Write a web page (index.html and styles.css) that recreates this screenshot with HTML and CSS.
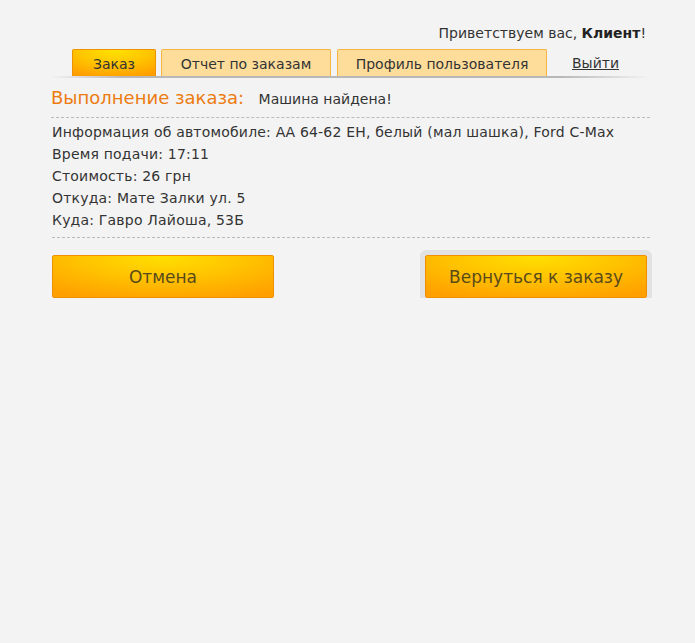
FILE: index.html
```html
<!DOCTYPE html>
<html lang="ru">
<head>
  <meta charset="UTF-8">
  <title>Выполнение заказа</title>
  <link rel="stylesheet" href="styles.css">
</head>
<body>
  <div class="container">
    <div class="greeting">Приветствуем вас, <b>Клиент</b>!</div>

    <div class="tabs">
      <a class="tab active" href="#">Заказ</a>
      <a class="tab tab-report" href="#">Отчет по заказам</a>
      <a class="tab tab-profile" href="#">Профиль пользователя</a>
      <a class="logout" href="#">Выйти</a>
    </div>

    <div class="content">
      <div class="title">
        <span class="title-main">Выполнение заказа:</span>
        <span class="title-status">Машина найдена!</span>
      </div>

      <div class="info">
        <div>Информация об автомобиле: АА 64-62 ЕН, белый (мал шашка), Ford C-Max</div>
        <div>Время подачи: 17:11</div>
        <div>Стоимость: 26 грн</div>
        <div>Откуда: Мате Залки ул. 5</div>
        <div>Куда: Гавро Лайоша, 53Б</div>
      </div>

      <div class="actions">
        <button class="btn">Отмена</button>
        <button class="btn focused">Вернуться к заказу</button>
      </div>
    </div>
  </div>
</body>
</html>
```

FILE: styles.css
```css
body {
  margin: 0;
  background: #f3f3f3;
  font-family: "DejaVu Sans", Verdana, sans-serif;
  font-size: 14px;
  color: #333;
}

.container {
  width: 600px;
  margin-left: 50px;
  padding-top: 23px;
}

.greeting {
  text-align: right;
  padding-right: 4px;
  line-height: 20px;
}

.greeting b {
  color: #222;
}

.tabs {
  display: flex;
  align-items: flex-end;
  gap: 5px;
  margin-top: 6px;
  padding: 0 0 2px 22px;
  height: 27px;
  background: linear-gradient(to right, rgba(180, 180, 180, 0), #b8b8b8 12%, #b8b8b8 85%, rgba(180, 180, 180, 0)) no-repeat left bottom / 100% 2px;
}

.tab {
  flex: none;
  display: block;
  height: 26px;
  line-height: 28px;
  border: 1px solid #f5b444;
  border-bottom: none;
  border-radius: 2px 2px 0 0;
  background: #fedd9b;
  color: #333;
  text-align: center;
  white-space: nowrap;
  text-decoration: none;
}

.tab.active {
  width: 82px;
  border-color: #ee9200;
  background: radial-gradient(ellipse 90% 110% at 50% 0, #ffe200 0%, #ffc400 50%, #ff9c00 100%);
}

.tab-report {
  width: 168px;
}

.tab-profile {
  width: 208px;
  margin-left: 1px;
}

.logout {
  flex: none;
  margin-left: 20px;
  line-height: 26px;
  height: 26px;
  color: #333;
  text-decoration: underline;
}

.content {
  margin-left: 2px;
}

.title {
  padding-top: 9px;
  margin-left: -1px;
  height: 30px;
  border-bottom: 1px dashed #bbb;
  white-space: nowrap;
}

.title-main {
  font-size: 18px;
  color: #ec7b12;
  margin-right: 10px;
}

.info {
  padding: 3px 0 6px 0;
  line-height: 22px;
  letter-spacing: 0.2px;
  border-bottom: 1px dashed #bbb;
}

.actions {
  display: flex;
  justify-content: space-between;
  padding: 17px 3px 0 0;
}

.btn {
  width: 222px;
  height: 43px;
  border: 1px solid #f09000;
  border-radius: 2px;
  background: radial-gradient(ellipse 80% 110% at 50% 0, #ffe000 0%, #ffc200 50%, #ffa000 100%);
  font-family: "DejaVu Sans", Verdana, sans-serif;
  font-size: 17px;
  color: #5a4a1a;
  cursor: pointer;
}

.btn.focused {
  box-shadow: 0 0 0 5px #e2e2e2;
}
```
